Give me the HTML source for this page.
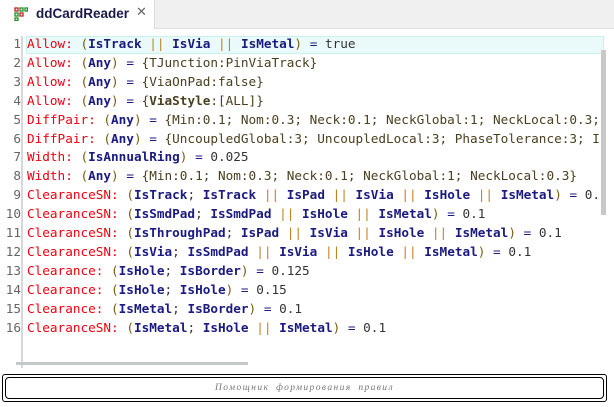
<!DOCTYPE html>
<html><head><meta charset="utf-8"><style>
body{margin:0;width:614px;height:407px;background:#fff;position:relative;overflow:hidden;font-family:"DejaVu Sans Mono","Liberation Mono",monospace}
.hdr{position:absolute;left:0;top:0;width:614px;height:28px;background:#f0f0f0;border-bottom:1px solid #e0e0e0}
.tab{position:absolute;left:0;top:0;width:154px;height:29px;background:#fff;border-right:1px solid #dcdcdc}
.tab .t{position:absolute;left:36px;top:6px;font:bold 13.5px "Liberation Sans",sans-serif;color:#1a1a4a}
.tab .x{position:absolute;left:136px;top:5px;font:13px "DejaVu Sans",sans-serif;color:#666}
.gut{position:absolute;left:21px;top:36px;width:2px;height:332px;background:#d8d8d8}
.hl{position:absolute;left:26px;top:36px;width:578px;height:18px;background:#eafafa;border:1px solid #c8f2f0;box-sizing:border-box}
.ln{position:absolute;left:0;width:21px;text-align:right;font-size:12.7px;color:#666}
.cd{position:absolute;left:27px;font-size:12.7px;white-space:pre;color:#333}
.k{color:#f00010}.p{color:#7a5a10}.i{color:#1a1a80;font-weight:bold}.o{color:#c08020}.e{color:#1a1a80}.v{color:#4a4020}
.vs{position:absolute;left:601px;top:50px;width:5px;height:165px;background:#c8c8c8}
.hs{position:absolute;left:16px;top:362px;width:232px;height:3px;background:#c4c8c8}
.box{position:absolute;left:2px;top:374px;width:605px;height:28px;border:1px solid #000;box-sizing:border-box;border-radius:3px}
.box div{position:absolute;left:2px;top:2px;right:2px;bottom:2px;border:1px solid #000;border-radius:4px;text-align:center;font:italic 9.5px "Liberation Serif",serif;color:#777;line-height:20px;letter-spacing:1.4px;word-spacing:3px}
</style></head><body>
<div class="hdr"></div>
<div class="tab">
<svg style="position:absolute;left:14px;top:7px" width="14" height="14" viewBox="0 0 14 14"><g fill="none" stroke-width="1.3"><rect x="1" y="1" width="3" height="3" stroke="#c02020"/><rect x="6" y="1" width="3" height="3" stroke="#209020"/><rect x="11" y="1" width="2.5" height="3" stroke="#209020"/><rect x="1" y="6" width="3" height="3" stroke="#209020"/><rect x="6" y="6" width="3" height="3" stroke="#c02020"/><rect x="1" y="11" width="3" height="2.5" stroke="#209020"/></g></svg>
<span class="t">ddCardReader</span><span class="x">✕</span></div>
<div class="gut"></div>
<div class="hl"></div>
<div class="vs"></div><div class="hs"></div>
<div id="c"></div>
<div class="box"><div>Помощник формирования правил</div></div>
<script>
const L=[
'<span class="k">Allow:</span> <span class="p">(</span><span class="i">IsTrack</span> <span class="o">||</span> <span class="i">IsVia</span> <span class="o">||</span> <span class="i">IsMetal</span><span class="p">)</span> <span class="e">=</span> true',
'<span class="k">Allow:</span> <span class="p">(</span><span class="i">Any</span><span class="p">)</span> <span class="e">=</span> <span class="v">{TJunction:PinViaTrack}</span>',
'<span class="k">Allow:</span> <span class="p">(</span><span class="i">Any</span><span class="p">)</span> <span class="e">=</span> <span class="v">{ViaOnPad:false}</span>',
'<span class="k">Allow:</span> <span class="p">(</span><span class="i">Any</span><span class="p">)</span> <span class="e">=</span> <span class="v">{<b>ViaStyle</b>:[ALL]}</span>',
'<span class="k">DiffPair:</span> <span class="p">(</span><span class="i">Any</span><span class="p">)</span> <span class="e">=</span> <span class="v">{Min:0.1; Nom:0.3; Neck:0.1; NeckGlobal:1; NeckLocal:0.3; </span>',
'<span class="k">DiffPair:</span> <span class="p">(</span><span class="i">Any</span><span class="p">)</span> <span class="e">=</span> <span class="v">{UncoupledGlobal:3; UncoupledLocal:3; PhaseTolerance:3; Ir</span>',
'<span class="k">Width:</span> <span class="p">(</span><span class="i">IsAnnualRing</span><span class="p">)</span> <span class="e">=</span> 0.025',
'<span class="k">Width:</span> <span class="p">(</span><span class="i">Any</span><span class="p">)</span> <span class="e">=</span> <span class="v">{Min:0.1; Nom:0.3; Neck:0.1; NeckGlobal:1; NeckLocal:0.3}</span>',
'<span class="k">ClearanceSN:</span> <span class="p">(</span><span class="i">IsTrack</span>; <span class="i">IsTrack</span> <span class="o">||</span> <span class="i">IsPad</span> <span class="o">||</span> <span class="i">IsVia</span> <span class="o">||</span> <span class="i">IsHole</span> <span class="o">||</span> <span class="i">IsMetal</span><span class="p">)</span> <span class="e">=</span> 0.1',
'<span class="k">ClearanceSN:</span> <span class="p">(</span><span class="i">IsSmdPad</span>; <span class="i">IsSmdPad</span> <span class="o">||</span> <span class="i">IsHole</span> <span class="o">||</span> <span class="i">IsMetal</span><span class="p">)</span> <span class="e">=</span> 0.1',
'<span class="k">ClearanceSN:</span> <span class="p">(</span><span class="i">IsThroughPad</span>; <span class="i">IsPad</span> <span class="o">||</span> <span class="i">IsVia</span> <span class="o">||</span> <span class="i">IsHole</span> <span class="o">||</span> <span class="i">IsMetal</span><span class="p">)</span> <span class="e">=</span> 0.1',
'<span class="k">ClearanceSN:</span> <span class="p">(</span><span class="i">IsVia</span>; <span class="i">IsSmdPad</span> <span class="o">||</span> <span class="i">IsVia</span> <span class="o">||</span> <span class="i">IsHole</span> <span class="o">||</span> <span class="i">IsMetal</span><span class="p">)</span> <span class="e">=</span> 0.1',
'<span class="k">Clearance:</span> <span class="p">(</span><span class="i">IsHole</span>; <span class="i">IsBorder</span><span class="p">)</span> <span class="e">=</span> 0.125',
'<span class="k">Clearance:</span> <span class="p">(</span><span class="i">IsHole</span>; <span class="i">IsHole</span><span class="p">)</span> <span class="e">=</span> 0.15',
'<span class="k">Clearance:</span> <span class="p">(</span><span class="i">IsMetal</span>; <span class="i">IsBorder</span><span class="p">)</span> <span class="e">=</span> 0.1',
'<span class="k">ClearanceSN:</span> <span class="p">(</span><span class="i">IsMetal</span>; <span class="i">IsHole</span> <span class="o">||</span> <span class="i">IsMetal</span><span class="p">)</span> <span class="e">=</span> 0.1'];
let h='';L.forEach((s,n)=>{const t=36+n*18.9;h+=`<div class="ln" style="top:${t}px">${n+1}</div><div class="cd" style="top:${t}px;width:574px;overflow:hidden">${s}</div>`});
document.getElementById('c').innerHTML=h;
</script>
</body></html>
